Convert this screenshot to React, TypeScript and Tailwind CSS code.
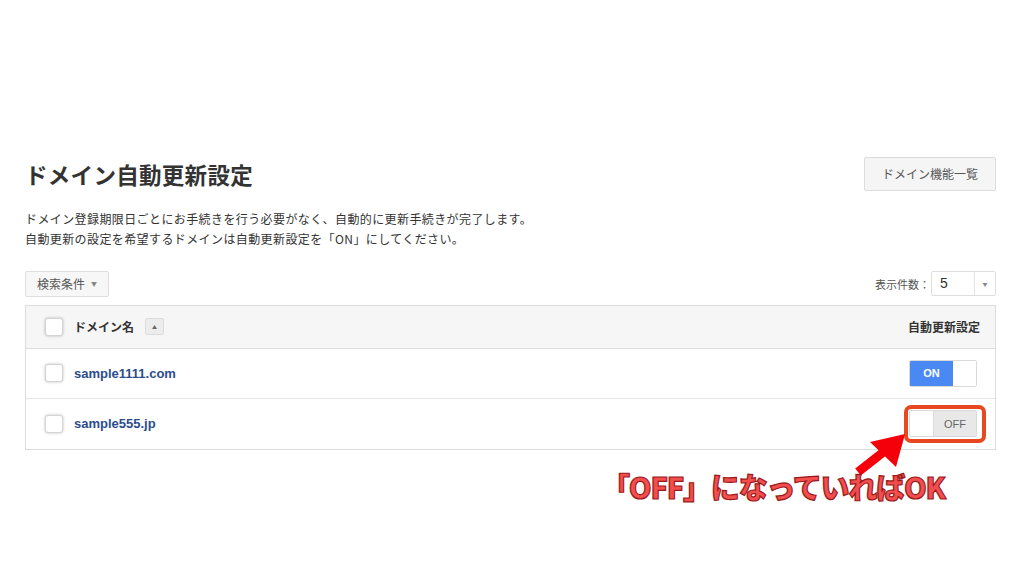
import React from 'react';

const jp = { fontFamily: '"Noto Sans CJK JP", "Noto Sans", sans-serif' };

function Checkbox() {
  return (
    <span className="inline-block h-[18px] w-[18px] rounded-[3px] border border-[#d4d4d4] bg-white shadow-[0_0_3px_rgba(0,0,0,0.25)]" />
  );
}

function Toggle({ on }: { on: boolean }) {
  return (
    <div className="flex h-[27px] w-[68px] overflow-hidden rounded-[2px] border border-[#d9d9d9] text-[11px] font-['Liberation_Sans',sans-serif]">
      {on ? (
        <>
          <div className="flex w-[43px] items-center justify-center bg-[#4a89f3] font-bold text-white">ON</div>
          <div className="flex-1 bg-white" />
        </>
      ) : (
        <>
          <div className="w-[23px] bg-white" />
          <div className="flex flex-1 items-center justify-center border-l border-[#dcdcdc] bg-[#e8e8e8] text-[#666]">OFF</div>
        </>
      )}
    </div>
  );
}

const rows = [
  { name: 'sample1111.com', on: true },
  { name: 'sample555.jp', on: false },
];

export default function App() {
  return (
    <div className="relative h-[576px] w-[1024px] overflow-hidden bg-white text-[#333]" style={jp}>
      <div className="pl-[25px] pr-[28px] pt-[157px]">
        <div className="flex items-center justify-between">
          <h1 className="mt-[1px] text-[22.5px] font-bold tracking-[0.3px] text-[#333]">ドメイン自動更新設定</h1>
          <button className="h-[34px] w-[132px] rounded-[2px] border border-[#dcdcdc] bg-[#f5f5f5] text-[12px] text-[#555]">
            ドメイン機能一覧
          </button>
        </div>

        <div className="mt-[17px] text-[12px] leading-[20px] tracking-[0.4px] text-[#333]">
          <p>ドメイン登録期限日ごとにお手続きを行う必要がなく、自動的に更新手続きが完了します。</p>
          <p>自動更新の設定を希望するドメインは自動更新設定を「ON」にしてください。</p>
        </div>

        <div className="mt-[22px] flex items-center justify-between">
          <button className="flex h-[26px] w-[84px] items-center justify-center gap-[6px] rounded-[2px] border border-[#dedede] bg-[#f7f7f7] text-[12px] text-[#555]">
            検索条件 <span className="text-[6px] text-[#888]">▼</span>
          </button>
          <div className="flex items-center text-[11px] text-[#555]">
            <span>表示件数：</span>
            <div className="ml-[1px] flex h-[25px] w-[65px] rounded-[2px] border border-[#dedede] bg-white">
              <span className="flex-1 pl-[8px] text-[14px] leading-[23px] text-[#333] font-['Liberation_Sans',sans-serif]">5</span>
              <span className="flex w-[21px] items-center justify-center border-l border-[#e2e2e2] text-[5px] text-[#888]">▼</span>
            </div>
          </div>
        </div>

        <div className="mt-[8px] border border-[#dcdcdc]">
          <div className="flex h-[43px] items-center justify-between border-b border-[#dcdcdc] bg-[#f6f6f6] pl-[19px] pr-[15px]">
            <div className="flex items-center">
              <Checkbox />
              <span className="ml-[11px] text-[12px] font-bold text-[#333]">ドメイン名</span>
              <span className="ml-[11px] flex h-[17px] w-[19px] items-center justify-center rounded-[2px] border border-[#dcdcdc] bg-[#ececec] text-[5px] text-[#666]">▲</span>
            </div>
            <span className="text-[12px] font-bold text-[#333]">自動更新設定</span>
          </div>
          {rows.map((r, i) => (
            <div key={r.name} className={`flex h-[50px] items-center justify-between pl-[19px] pr-[18px] ${i === 0 ? 'border-b border-[#e6e6e6]' : ''}`}>
              <div className="flex items-center">
                <Checkbox />
                <span className="ml-[11px] text-[13px] font-bold text-[#2c4d8c] font-['Liberation_Sans',sans-serif]">{r.name}</span>
              </div>
              <Toggle on={r.on} />
            </div>
          ))}
        </div>
      </div>

      {/* annotation */}
      <div className="absolute left-[904px] top-[405px] h-[38px] w-[82px] rounded-[7px] border-[4px] border-[#e8481f]" />
      <svg className="absolute left-[850px] top-[427px]" width="64" height="52" viewBox="0 0 64 52">
        <line x1="8" y1="45" x2="36" y2="23" stroke="#f5000a" strokeWidth="9" />
        <polygon points="55,7 20,15 46,40" fill="#f5000a" />
      </svg>
      <div
        className="absolute left-[601px] top-[465px] text-[29px] font-black tracking-[-1.2px] text-[#f24e4e] [-webkit-text-stroke:1.2px_#9a1a1a]"
        style={jp}
      >
        「OFF」になっていればOK
      </div>
    </div>
  );
}
